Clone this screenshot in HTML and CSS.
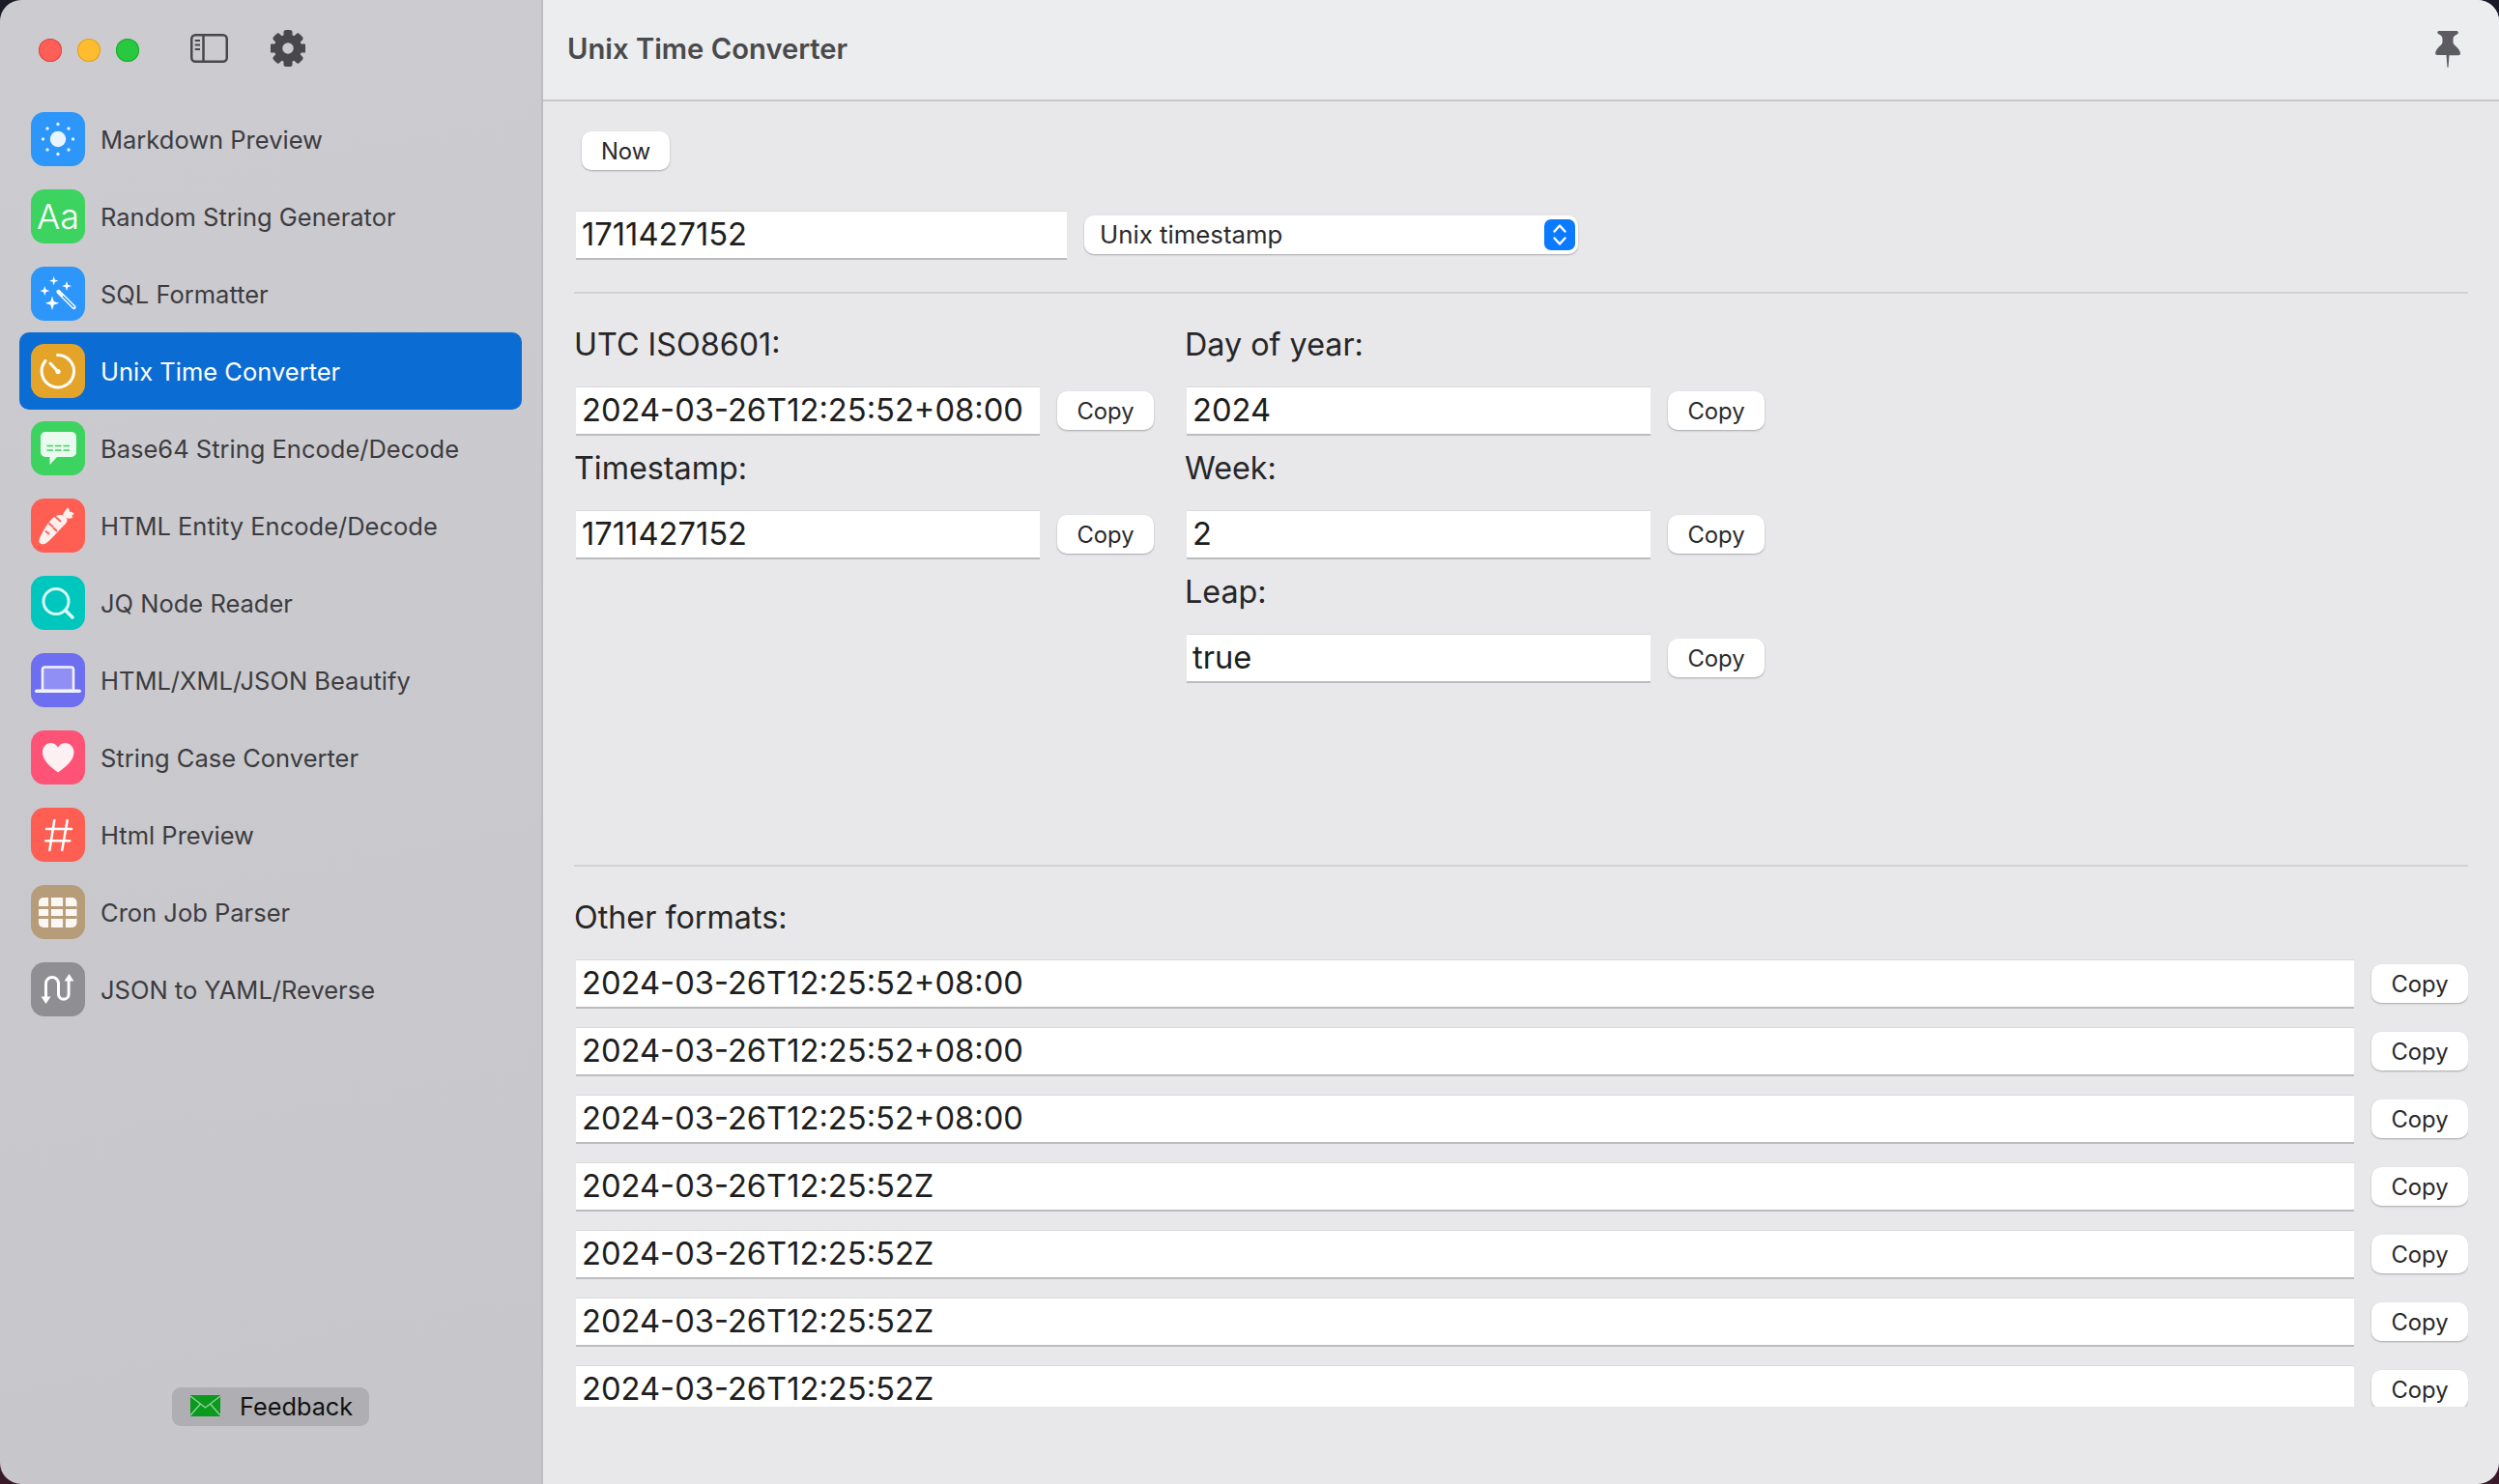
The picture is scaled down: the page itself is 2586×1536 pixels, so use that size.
FILE: index.html
```html
<!DOCTYPE html>
<html lang="en">
<head>
    <meta charset="UTF-8">
    <title>Unix Time Converter</title>
    <link rel="stylesheet" href="styles.css">
</head>
<body>
<div class="window">
    <aside class="sidebar">
        <div class="titlebar">
            <span class="light red"></span>
            <span class="light yellow"></span>
            <span class="light green"></span>
            <svg class="tool-toggle" viewBox="0 0 39 30" fill="none" stroke="#48484c">
                <rect x="1.25" y="1.25" width="36.5" height="27.5" rx="4" stroke-width="2.5"/>
                <path d="M13.500 1.500V28.500" stroke-width="2.500"/>
                <path d="M4.700 7h5.300M4.700 11.500h5.300M4.700 16h5.300" stroke-width="2"/>
            </svg>
            <svg class="tool-gear" viewBox="0 0 36 38">
                <g fill="#48484c">
                    <rect x="13.500" y="0" width="9" height="10" rx="2.500"/>
                    <rect x="13.500" y="0" width="9" height="10" rx="2.500" transform="rotate(45 18 19)"/>
                    <rect x="13.500" y="0" width="9" height="10" rx="2.500" transform="rotate(90 18 19)"/>
                    <rect x="13.500" y="0" width="9" height="10" rx="2.500" transform="rotate(135 18 19)"/>
                    <rect x="13.500" y="0" width="9" height="10" rx="2.500" transform="rotate(180 18 19)"/>
                    <rect x="13.500" y="0" width="9" height="10" rx="2.500" transform="rotate(225 18 19)"/>
                    <rect x="13.500" y="0" width="9" height="10" rx="2.500" transform="rotate(270 18 19)"/>
                    <rect x="13.500" y="0" width="9" height="10" rx="2.500" transform="rotate(315 18 19)"/>
                </g>
                <circle cx="18" cy="19" r="10" fill="none" stroke="#48484c" stroke-width="8.500"/>
            </svg>
        </div>

        <nav class="menu">
            <a class="item">
                <svg class="icon" viewBox="0 0 56 56">
                    <rect width="56" height="56" rx="14" fill="#2d96fb"/>
                    <circle cx="28" cy="28" r="8.200" fill="#e8f4ff"/>
                    <g fill="#e8f4ff">
                        <circle cx="28" cy="12.500" r="1.700"/><circle cx="28" cy="43.500" r="1.700"/>
                        <circle cx="12.500" cy="28" r="1.700"/><circle cx="43.500" cy="28" r="1.700"/>
                        <circle cx="17" cy="17" r="1.700"/><circle cx="39" cy="17" r="1.700"/>
                        <circle cx="17" cy="39" r="1.700"/><circle cx="39" cy="39" r="1.700"/>
                    </g>
                </svg>
                <span>Markdown Preview</span>
            </a>
            <a class="item">
                <span class="icon icon-aa">Aa</span>
                <span>Random String Generator</span>
            </a>
            <a class="item">
                <svg class="icon" viewBox="0 0 56 56">
                    <rect width="56" height="56" rx="14" fill="#2d96fb"/>
                    <g fill="#fff">
                        <path d="M23.700 10l1.100 3.600 3.600 1.100-3.600 1.100-1.100 3.600-1.100-3.600-3.600-1.100 3.600-1.100z"/>
                        <path d="M37 15l1.200 3.800 3.800 1.200-3.800 1.200L37 25l-1.200-3.800L32 20l3.800-1.200z"/>
                        <path d="M14.300 20l1.200 3.800 3.800 1.200-3.800 1.200-1.200 3.800-1.200-3.800L9.300 25l3.800-1.200z"/>
                        <path d="M22 30.500l1.700 5.500 5.500 1.700-5.500 1.700-1.700 5.500-1.700-5.500-5.500-1.700 5.500-1.700z"/>
                    </g>
                    <path d="M28.500 26l16 16" stroke="#fff" stroke-width="4.200" stroke-linecap="round"/>
                    <path d="M33 30.500l11.500 11.500" stroke="#2d96fb" stroke-width="1.600"/>
                </svg>
                <span>SQL Formatter</span>
            </a>
            <a class="item active">
                <svg class="icon" viewBox="0 0 56 56" fill="none">
                    <rect width="56" height="56" rx="14" fill="#e4a42a"/>
                    <path d="M27.500 11.500A16.700 16.700 0 1 1 15 17.500" stroke="#fff" stroke-width="3" stroke-linecap="round"/>
                    <path d="M20 20l8 8.500" stroke="#fff" stroke-width="3" stroke-linecap="round"/>
                    <circle cx="28" cy="28.500" r="2.600" fill="#fff"/>
                </svg>
                <span>Unix Time Converter</span>
            </a>
            <a class="item">
                <svg class="icon" viewBox="0 0 56 56">
                    <rect width="56" height="56" rx="14" fill="#3dd360"/>
                    <path d="M15 11h27a5 5 0 0 1 5 5v16a5 5 0 0 1-5 5H27l-7.500 8v-8H15a5 5 0 0 1-5-5V16a5 5 0 0 1 5-5z" fill="#e9fbee"/>
                    <path d="M16.500 25.500h23.500M16.500 30h23.500" stroke="#3dd360" stroke-width="1.700" stroke-dasharray="6.500 2"/>
                </svg>
                <span>Base64 String Encode/Decode</span>
            </a>
            <a class="item">
                <svg class="icon" viewBox="0 0 56 56">
                    <rect width="56" height="56" rx="14" fill="#ff5f52"/>
                    <path d="M8.500 43c2-7 10-20 15.500-24 4-2.500 9-2.500 11.500-.5 3 2.500 2.500 6-.5 8.500-5 4.500-13.500 15-19 19-3.500 2.500-8.500 1-7.500-3z" fill="#fff0ed"/>
                    <path d="M33 17c1-3 3-5 5-7.500 1.500 1 2 3 2 4.500 2-.5 3.500.5 4.500 2-1 1-2 1.500-2.500 2 1 .5 1.500 1 1.500 1.500-2 1.500-5 1.500-6.500.5z" fill="#fff0ed"/>
                    <path d="M25 18.500l5.500 5M19 26l3.500 3M26.500 33.500l-3-3M15.500 34l3 2.500" stroke="#ff5f52" stroke-width="1.800" stroke-linecap="round"/>
                </svg>
                <span>HTML Entity Encode/Decode</span>
            </a>
            <a class="item">
                <svg class="icon" viewBox="0 0 56 56" fill="none" stroke="#dcfbf8">
                    <rect width="56" height="56" rx="14" fill="#00c7be" stroke="none"/>
                    <circle cx="26" cy="26.500" r="13" stroke-width="3"/>
                    <path d="M35.500 35.500l7.500 7.500" stroke-width="3.500" stroke-linecap="round"/>
                </svg>
                <span>JQ Node Reader</span>
            </a>
            <a class="item">
                <svg class="icon" viewBox="0 0 56 56">
                    <rect width="56" height="56" rx="14" fill="#6e6ef0"/>
                    <path d="M12 39V17a2.500 2.500 0 0 1 2.500-2.500h27a2.500 2.500 0 0 1 2.500 2.500v22z" fill="#8f8ff6" stroke="#f2f2ff" stroke-width="2.600"/>
                    <rect x="4" y="37.500" width="48" height="3.600" rx="1.800" fill="#f2f2ff"/>
                </svg>
                <span>HTML/XML/JSON Beautify</span>
            </a>
            <a class="item">
                <svg class="icon" viewBox="0 0 56 56">
                    <rect width="56" height="56" rx="14" fill="#ff5277"/>
                    <path d="M28 43.500C21 38 12 32 12 22.500 12 17 16 13 20.500 13c3.300 0 6 1.700 7.500 4.700C29.500 14.700 32.200 13 35.500 13 40 13 44.500 17 44.500 22.500 44.500 32 35 38 28 43.500z" fill="#fff0f3"/>
                </svg>
                <span>String Case Converter</span>
            </a>
            <a class="item">
                <svg class="icon" viewBox="0 0 56 56" stroke="#fff" stroke-width="2.500" stroke-linecap="round">
                    <rect width="56" height="56" rx="14" fill="#ff5e52" stroke="none"/>
                    <path d="M24.300 13l-5 31M37.700 13l-5.500 31M16 22h26M15.300 34.300h25"/>
                </svg>
                <span>Html Preview</span>
            </a>
            <a class="item">
                <svg class="icon" viewBox="0 0 56 56">
                    <rect width="56" height="56" rx="14" fill="#b69c78"/>
                    <rect x="8" y="13" width="39.500" height="31" rx="5" fill="#fbf8f3"/>
                    <path d="M19.500 13v31M34.500 13v31M8 23.500h39.500M8 33.500h39.500" stroke="#b69c78" stroke-width="2.800"/>
                </svg>
                <span>Cron Job Parser</span>
            </a>
            <a class="item">
                <svg class="icon" viewBox="0 0 56 56" fill="none" stroke="#fff" stroke-width="3">
                    <rect width="56" height="56" rx="14" fill="#8e8e93" stroke="none"/>
                    <path d="M15.500 38V22a6.500 6.500 0 0 1 13 0v11a5.300 5.300 0 0 0 10.600 0V17"/>
                    <path d="M10.500 35.500h10L15.500 43zM34.500 19.500h10L39.500 12z" fill="#fff" stroke="none"/>
                </svg>
                <span>JSON to YAML/Reverse</span>
            </a>
        </nav>

        <button class="feedback">
            <svg class="mail" viewBox="0 0 31 22" fill="none">
                <rect width="31" height="22" fill="#0a9a1e"/>
                <path d="M0 1l15.500 12L31 1M0 21l10.500-12M31 21L20.500 9" stroke="#9fd0a6" stroke-width="1.200"/>
            </svg>
            <span>Feedback</span>
        </button>
    </aside>

    <main class="main">
        <header class="header">
            <h1>Unix Time Converter</h1>
            <svg class="pin" viewBox="0 0 26 38">
                <path d="M3.500 0h18.500a1.800 1.800 0 0 1 1 3.300c-3 1.500-4.500 2.500-4.500 5.200v3c0 3 3 4 5 6.500 1.500 2 2.500 3.600 2.500 5.500 0 1-.8 1.700-2 1.700H14.500l-1 12.500h-1L11.500 25H2.200c-1.200 0-2-.7-2-1.700 0-1.900 1-3.500 2.500-5.500 2-2.500 4.800-3.500 4.800-6.500v-3c0-2.700-1.500-3.700-4.500-5.200A1.800 1.800 0 0 1 3.500 0z" fill="#5c5c60"/>
            </svg>
        </header>

        <section class="content">
            <button class="btn btn-now">Now</button>

            <div class="source-row">
                <div class="field field-source">1711427152</div>
                <div class="select">
                    <span>Unix timestamp</span>
                    <svg class="stepper" viewBox="0 0 32 32" fill="none">
                        <rect width="32" height="32" rx="7" fill="#0a7aff"/>
                        <path d="M10.500 12.500L16 6.500l5.500 6M10.500 19.500L16 25.500l5.500-6" stroke="#fff" stroke-width="2.400" stroke-linecap="round" stroke-linejoin="round"/>
                    </svg>
                </div>
            </div>

            <hr class="divider">

            <div class="columns">
                <div class="column">
                    <div class="label">UTC ISO8601:</div>
                    <div class="value-row">
                        <div class="field">2024-03-26T12:25:52+08:00</div>
                        <button class="btn">Copy</button>
                    </div>
                    <div class="label">Timestamp:</div>
                    <div class="value-row">
                        <div class="field">1711427152</div>
                        <button class="btn">Copy</button>
                    </div>
                </div>
                <div class="column">
                    <div class="label">Day of year:</div>
                    <div class="value-row">
                        <div class="field">2024</div>
                        <button class="btn">Copy</button>
                    </div>
                    <div class="label">Week:</div>
                    <div class="value-row">
                        <div class="field">2</div>
                        <button class="btn">Copy</button>
                    </div>
                    <div class="label">Leap:</div>
                    <div class="value-row">
                        <div class="field">true</div>
                        <button class="btn">Copy</button>
                    </div>
                </div>
            </div>

            <hr class="divider divider-low">

            <div class="label">Other formats:</div>
            <div class="formats">
                <div class="value-row"><div class="field">2024-03-26T12:25:52+08:00</div><button class="btn">Copy</button></div>
                <div class="value-row"><div class="field">2024-03-26T12:25:52+08:00</div><button class="btn">Copy</button></div>
                <div class="value-row"><div class="field">2024-03-26T12:25:52+08:00</div><button class="btn">Copy</button></div>
                <div class="value-row"><div class="field">2024-03-26T12:25:52Z</div><button class="btn">Copy</button></div>
                <div class="value-row"><div class="field">2024-03-26T12:25:52Z</div><button class="btn">Copy</button></div>
                <div class="value-row"><div class="field">2024-03-26T12:25:52Z</div><button class="btn">Copy</button></div>
                <div class="value-row"><div class="field">2024-03-26T12:25:52Z</div><button class="btn">Copy</button></div>
            </div>
        </section>
    </main>
</div>
</body>
</html>
```

FILE: styles.css
```css
* { box-sizing: border-box; }

html, body {
    height: 100%;
}
body {
    margin: 0;
    background: linear-gradient(#1b1b28, #3a1a2a);
    font-family: Inter, "Noto Sans", sans-serif;
    overflow: hidden;
}
.window {
    display: flex;
    height: 1536px;
    border-radius: 22px;
    overflow: hidden;
}

/* sidebar */
.sidebar {
    display: flex;
    flex-direction: column;
    flex: 0 0 562px;
    background: linear-gradient(170deg, #cccbd0, #c7c7cb);
    border-right: 2px solid #bdbdc1;
}
.titlebar {
    display: flex;
    align-items: center;
    height: 104px;
    padding-left: 40px;
}
.light {
    width: 24px;
    height: 24px;
    border-radius: 50%;
    margin-right: 16px;
}
.red { background: #ff5f57; box-shadow: inset 0 0 0 1px #e0443e; }
.yellow { background: #febc2e; box-shadow: inset 0 0 0 1px #dea123; }
.green { background: #28c840; box-shadow: inset 0 0 0 1px #1aab29; }
.tool-toggle {
    width: 39px;
    height: 30px;
    margin: 0 0 4px 37px;
}
.tool-gear {
    width: 36px;
    height: 38px;
    margin: 0 0 4px 44px;
}
.item {
    display: flex;
    align-items: center;
    gap: 16px;
    width: 520px;
    height: 80px;
    margin-left: 20px;
    padding-left: 12px;
    border-radius: 10px;
    color: #3c3c40;
    font-size: 25.5px;
}
.item.active {
    background: #0b6cd4;
    color: #fff;
}
.icon {
    flex: 0 0 56px;
    width: 56px;
    height: 56px;
}
.icon-aa {
    display: flex;
    align-items: center;
    justify-content: center;
    border-radius: 14px;
    background: #3dd360;
    color: #fff;
    font-size: 36px;
    font-weight: 300;
}
.feedback {
    display: flex;
    align-items: center;
    align-self: center;
    gap: 20px;
    width: 204px;
    height: 40px;
    margin: auto 0 60px;
    padding: 0 0 2px 19px;
    border: none;
    border-radius: 9px;
    background: #aeaeb3;
    color: #111;
    font-family: inherit;
    font-size: 25.3px;
}
.mail {
    width: 31px;
    height: 22px;
}

/* main area */
.main {
    flex: 1;
    min-width: 0;
    background: #e8e8ea;
}
.header {
    display: flex;
    align-items: center;
    justify-content: space-between;
    height: 105px;
    padding: 0 40px 2px 25px;
    background: #ecedef;
    border-bottom: 2px solid #c8c8ca;
}
.header h1 {
    margin: 0;
    color: #4a4a4c;
    font-size: 29.2px;
    font-weight: 600;
}
.pin {
    width: 26px;
    height: 38px;
}
.content {
    padding: 31px 32px 0 34px;
}
.btn {
    flex: 0 0 100px;
    width: 100px;
    height: 40px;
    padding: 0;
    border: none;
    border-radius: 10px;
    background: #fff;
    box-shadow: 0 1px 2px rgba(0, 0, 0, 0.28);
    color: #2a2a2c;
    font-family: inherit;
    font-size: 23.8px;
}
.btn-now {
    display: block;
    width: 91px;
    margin-left: 6px;
}
.source-row {
    display: flex;
    align-items: center;
    gap: 18px;
    margin-top: 42px;
}
.field {
    flex: 0 0 480px;
    height: 51px;
    margin-bottom: -1px;
    padding-left: 6px;
    background: #fff;
    border-top: 1px solid #dadada;
    border-bottom: 2px solid #bcbcbe;
    color: #1e1e20;
    font-size: 32.7px;
    line-height: 47px;
    white-space: nowrap;
}
.field-source {
    flex-basis: 508px;
}
.select {
    display: flex;
    align-items: center;
    justify-content: space-between;
    width: 511px;
    height: 40px;
    padding: 0 3px 2px 16px;
    border-radius: 10px;
    background: #fff;
    box-shadow: 0 1px 2px rgba(0, 0, 0, 0.28);
    color: #2a2a2c;
    font-size: 25.8px;
}
.stepper {
    width: 32px;
    height: 32px;
    margin-top: 2px;
}
.divider {
    height: 2px;
    margin: 34px 0 0 -2px;
    border: none;
    background: #d2d2d4;
}
.divider-low {
    margin-top: 189px;
}
.columns {
    display: flex;
    gap: 34px;
}
.column {
    width: 598px;
}
.label {
    display: flex;
    align-items: center;
    height: 68px;
    margin: 0 0 10px -2px;
    color: #262628;
    font-size: 32.3px;
}
.column .label:first-child,
.divider-low + .label {
    margin-top: 18px;
}
.value-row {
    display: flex;
    align-items: center;
    gap: 18px;
}
.formats {
    display: flex;
    flex-direction: column;
    gap: 20px;
    height: 463px;
    overflow: hidden;
}
.formats .field {
    flex: 1;
}
```
